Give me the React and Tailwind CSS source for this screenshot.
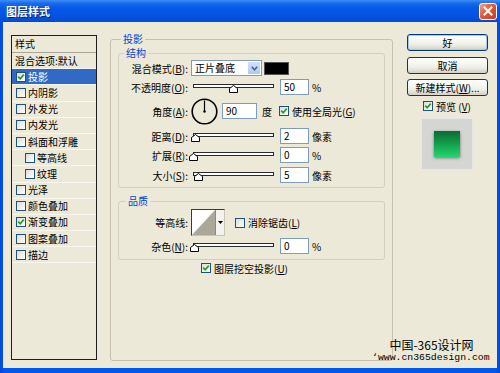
import React from "react";

function Check({ checked = false, className = "" }) {
  return (
    <span
      className={`inline-flex items-center justify-center w-[10px] h-[10px] border border-[#1C5180] bg-[linear-gradient(135deg,#DCDCD7,#FFFFFF)] shrink-0 ${className}`}
    >
      {checked && (
        <svg width="8" height="8" viewBox="0 0 8 8">
          <path d="M1.2 3.6 L3.2 5.8 L6.8 1.6" stroke="#21A121" strokeWidth="1.7" fill="none" />
        </svg>
      )}
    </span>
  );
}

function Slider({ thumb }) {
  return (
    <div className="relative w-[81px] h-[16px] shrink-0">
      <div className="absolute left-0 right-0 top-[5px] h-[4px] bg-white border border-[#2a2a2a]" />
      <svg className="absolute top-[6px]" style={{ left: thumb }} width="9" height="8" viewBox="0 0 9 8">
        <path d="M4.5 0.5 L8.5 3.5 V7.5 H0.5 V3.5 Z" fill="#fff" stroke="#000" strokeWidth="1" />
      </svg>
    </div>
  );
}

function Field({ value, className = "" }) {
  return (
    <div
      className={`h-[16px] border border-[#7F9DB9] bg-white pl-[3px] leading-[14px] shrink-0 ${className}`}
    >
      {value}
    </div>
  );
}

function Btn({ children, def = false }) {
  return (
    <div
      className={`h-[17px] w-[81px] rounded-[3px] border border-[#003C74] bg-[linear-gradient(to_bottom,#FFFFFF,#F0F0EA_60%,#D6D0C5)] flex items-center justify-center leading-[15px] ${
        def ? "shadow-[inset_0_0_0_1px_#A8C4F0]" : ""
      }`}
    >
      {children}
    </div>
  );
}

const rows = [
  { t: "混合选项:默认", plain: true },
  { t: "投影", c: true, sel: true },
  { t: "内阴影" },
  { t: "外发光" },
  { t: "内发光" },
  { t: "斜面和浮雕" },
  { t: "等高线", ind: true },
  { t: "纹理", ind: true },
  { t: "光泽" },
  { t: "颜色叠加" },
  { t: "渐变叠加", c: true },
  { t: "图案叠加" },
  { t: "描边" },
];

export default function App() {
  return (
    <div className="w-[500px] h-[373px] flex flex-col bg-[linear-gradient(to_right,#0048D8,#0058EE_1%,#0058EE_99%,#0048D8)] font-['Noto_Sans_CJK_SC','Noto_Sans',sans-serif] text-[10px] text-black overflow-hidden">
      {/* title bar */}
      <div className="h-[22px] shrink-0 flex items-center justify-between pl-[6px] pr-[3px] bg-[linear-gradient(to_bottom,#3D8FF7_0%,#1A6CEB_14%,#0759E8_35%,#0453E0_70%,#004CD6_100%)]">
        <span className="text-white font-bold text-[11px] leading-[14px] [text-shadow:1px_1px_0_#0A246A]">
          图层样式
        </span>
        <div className="w-[18px] h-[17px] rounded-[3px] border border-white bg-[linear-gradient(135deg,#F0A088,#E25A38_45%,#C93A1C)] flex items-center justify-center">
          <svg width="10" height="10" viewBox="0 0 10 10">
            <path d="M1.5 1.5 L8.5 8.5 M8.5 1.5 L1.5 8.5" stroke="#fff" strokeWidth="2" strokeLinecap="square" />
          </svg>
        </div>
      </div>

      {/* body */}
      <div className="relative flex-1 mx-[3px] mb-[5px] bg-[#ECE9D8] flex items-start">
        {/* style list */}
        <div className="mt-[13px] ml-[8px] w-[86px] h-[325px] border border-[#1E1E1E] flex flex-col shrink-0">
          <div className="h-[17px] pl-[3px] leading-[16px] border-b border-[#A9A696]">样式</div>
          {rows.map((r, i) => (
            <div
              key={i}
              className={`h-[16.2px] flex items-center border-b border-[#F7F6EF] ${
                r.sel ? "bg-[#316AC5] text-white" : ""
              } ${r.plain ? "pl-[3px]" : r.ind ? "pl-[13px]" : "pl-[4px]"}`}
            >
              {!r.plain && <Check checked={!!r.c} className="mr-[2px]" />}
              <span className="leading-[14px]">{r.t}</span>
            </div>
          ))}
        </div>

        {/* main group: 投影 */}
        <fieldset className="mt-[11px] ml-[13px] w-[283px] h-[328px] border border-[#C4C1B1] rounded-[3px] shrink-0">
          <legend className="ml-[10px] px-[2px] leading-[12px] text-[#0046D5]">投影</legend>
          <div className="px-[7px] pt-[2px]">
            {/* 结构 */}
            <fieldset className="border border-[#D0D0BF] rounded-[3px]">
              <legend className="ml-[5px] px-[2px] leading-[12px] text-[#0046D5]">结构</legend>
              <div className="pt-[1px] pb-[4px]">
                <div className="flex items-center h-[16px]">
                  <span className="w-[69px] text-right shrink-0">
                    混合模式(<u>B</u>):
                  </span>
                  <div className="ml-[3px] flex h-[16px] w-[71px] border border-[#7F9DB9] bg-white">
                    <span className="flex-1 pl-[3px] leading-[14px]">正片叠底</span>
                    <span className="w-[14px] bg-[linear-gradient(to_bottom,#D2E0FD,#B0C8F6)] border border-white flex items-center justify-center">
                      <svg width="7" height="5" viewBox="0 0 7 5">
                        <path d="M0.8 0.8 L3.5 3.8 L6.2 0.8" stroke="#4D6185" strokeWidth="1.5" fill="none" />
                      </svg>
                    </span>
                  </div>
                  <div className="ml-[2px] w-[25px] h-[13px] bg-black border border-[#555]" />
                </div>

                <div className="flex items-center h-[16px] mt-[3px]">
                  <span className="w-[69px] text-right shrink-0">
                    不透明度(<u>O</u>):
                  </span>
                  <div className="ml-[5px]">
                    <Slider thumb={36} />
                  </div>
                  <Field value="50" className="ml-[6px] w-[29px]" />
                  <span className="ml-[3px]">%</span>
                </div>

                <div className="flex items-center h-[26px] mt-[3px]">
                  <span className="w-[69px] text-right shrink-0">
                    角度(<u>A</u>):
                  </span>
                  <svg className="ml-[3px] shrink-0" width="27" height="27" viewBox="0 0 27 27">
                    <circle cx="13.5" cy="13.5" r="12.3" fill="none" stroke="#000" strokeWidth="1.6" />
                    <line x1="13.5" y1="13.5" x2="13.5" y2="2.5" stroke="#000" strokeWidth="1.2" />
                    <circle cx="13.5" cy="13.5" r="1.2" fill="#000" />
                  </svg>
                  <Field value="90" className="ml-[4px] w-[35px]" />
                  <span className="ml-[5px]">度</span>
                  <Check checked className="ml-[7px]" />
                  <span className="ml-[3px]">
                    使用全局光(<u>G</u>)
                  </span>
                </div>

                <div className="flex items-center h-[16px] mt-[4px]">
                  <span className="w-[69px] text-right shrink-0">
                    距离(<u>D</u>):
                  </span>
                  <div className="ml-[5px]">
                    <Slider thumb={-2} />
                  </div>
                  <Field value="2" className="ml-[6px] w-[29px]" />
                  <span className="ml-[3px]">像素</span>
                </div>

                <div className="flex items-center h-[16px] mt-[3px]">
                  <span className="w-[69px] text-right shrink-0">
                    扩展(<u>R</u>):
                  </span>
                  <div className="ml-[5px]">
                    <Slider thumb={-4} />
                  </div>
                  <Field value="0" className="ml-[6px] w-[29px]" />
                  <span className="ml-[3px]">%</span>
                </div>

                <div className="flex items-center h-[16px] mt-[4px]">
                  <span className="w-[69px] text-right shrink-0">
                    大小(<u>S</u>):
                  </span>
                  <div className="ml-[5px]">
                    <Slider thumb={1} />
                  </div>
                  <Field value="5" className="ml-[6px] w-[29px]" />
                  <span className="ml-[3px]">像素</span>
                </div>
              </div>
            </fieldset>

            {/* 品质 */}
            <fieldset className="mt-[7px] border border-[#D0D0BF] rounded-[3px]">
              <legend className="ml-[7px] px-[2px] leading-[12px] text-[#0046D5]">品质</legend>
              <div className="pt-[2px] pb-[5px]">
                <div className="flex items-center h-[27px]">
                  <span className="w-[69px] text-right shrink-0">等高线:</span>
                  <div className="ml-[3px] flex h-[27px] w-[34px] border border-[#3a3a3a] border-b-[#C8C5B5] border-r-[#C8C5B5] bg-white">
                    <svg width="23" height="25" viewBox="0 0 23 25" className="shrink-0">
                      <rect x="0" y="0" width="23" height="25" fill="#fff" />
                      <polygon points="0,25 23,0 23,25" fill="#ABA799" />
                    </svg>
                    <div className="flex-1 border-l border-[#8a8a8a] bg-[#F4F3EE] flex items-center justify-center">
                      <svg width="5" height="3" viewBox="0 0 5 3">
                        <polygon points="0,0 5,0 2.5,3" fill="#000" />
                      </svg>
                    </div>
                  </div>
                  <Check className="ml-[10px]" />
                  <span className="ml-[3px]">
                    消除锯齿(<u>L</u>)
                  </span>
                </div>
                <div className="flex items-center h-[16px] mt-[2px]">
                  <span className="w-[69px] text-right shrink-0">
                    杂色(<u>N</u>):
                  </span>
                  <div className="ml-[5px]">
                    <Slider thumb={-3} />
                  </div>
                  <Field value="0" className="ml-[6px] w-[29px]" />
                  <span className="ml-[3px]">%</span>
                </div>
              </div>
            </fieldset>

            <div className="flex items-center h-[14px] mt-[1px] pl-[83px]">
              <Check checked />
              <span className="ml-[3px]">
                图层挖空投影(<u>U</u>)
              </span>
            </div>
          </div>
        </fieldset>

        {/* right column */}
        <div className="mt-[12px] ml-[14px] w-[81px] flex flex-col shrink-0">
          <Btn def>好</Btn>
          <div className="mt-[6px]">
            <Btn>取消</Btn>
          </div>
          <div className="mt-[5px]">
            <Btn>
              新建样式(<u>W</u>)...
            </Btn>
          </div>
          <div className="mt-[4px] h-[12px] flex items-center pl-[16px]">
            <Check checked />
            <span className="ml-[3px]">
              预览 (<u>V</u>)
            </span>
          </div>
          <div className="mt-[6px] ml-[14px] w-[52px] h-[52px] bg-[#D5D5D3] border border-[#E6E6E2] flex items-center justify-center">
            <div className="w-[26px] h-[26px] bg-[linear-gradient(to_bottom,#0A6B34,#14A550_55%,#24D470)] shadow-[0_1px_3px_rgba(0,0,0,0.45)]" />
          </div>
        </div>

        {/* watermark */}
        <div className="absolute left-[369px] top-[315px] flex flex-col items-end">
          <span className="text-[12px] leading-[15px] mr-[16px]">中国-365设计网</span>
          <span className="font-['Liberation_Mono',monospace] text-[9.8px] leading-[12px]">
            ‘www.cn365design.com
          </span>
        </div>
      </div>
    </div>
  );
}
